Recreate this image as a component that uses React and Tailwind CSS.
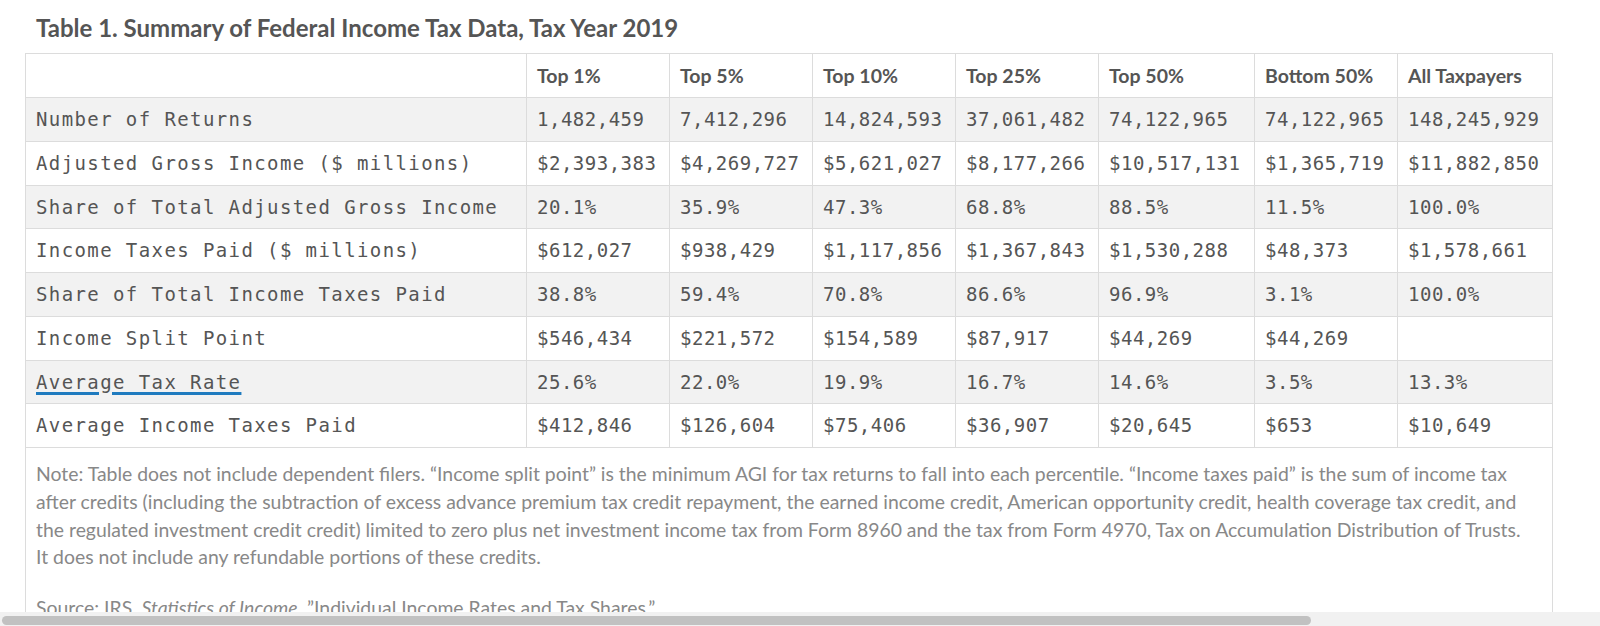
import React from 'react'

const cols = ['Top 1%', 'Top 5%', 'Top 10%', 'Top 25%', 'Top 50%', 'Bottom 50%', 'All Taxpayers']

const rows = [
    ['Number of Returns', '1,482,459', '7,412,296', '14,824,593', '37,061,482', '74,122,965', '74,122,965', '148,245,929'],
    ['Adjusted Gross Income ($ millions)', '$2,393,383', '$4,269,727', '$5,621,027', '$8,177,266', '$10,517,131', '$1,365,719', '$11,882,850'],
    ['Share of Total Adjusted Gross Income', '20.1%', '35.9%', '47.3%', '68.8%', '88.5%', '11.5%', '100.0%'],
    ['Income Taxes Paid ($ millions)', '$612,027', '$938,429', '$1,117,856', '$1,367,843', '$1,530,288', '$48,373', '$1,578,661'],
    ['Share of Total Income Taxes Paid', '38.8%', '59.4%', '70.8%', '86.6%', '96.9%', '3.1%', '100.0%'],
    ['Income Split Point', '$546,434', '$221,572', '$154,589', '$87,917', '$44,269', '$44,269', ''],
    ['Average Tax Rate', '25.6%', '22.0%', '19.9%', '16.7%', '14.6%', '3.5%', '13.3%'],
    ['Average Income Taxes Paid', '$412,846', '$126,604', '$75,406', '$36,907', '$20,645', '$653', '$10,649'],
]

export default function App() {
    return (
        <div className="h-[626px] flex flex-col overflow-hidden bg-white">
            <div className="flex-1 overflow-hidden pl-[25px]">
                <div className="h-[53px] flex items-end pb-[10px] pl-[11px]">
                    <h2 className="font-['Lato',sans-serif] font-bold text-[24px] leading-[30px] text-[#555]">
                        Table 1. Summary of Federal Income Tax Data, Tax Year 2019
                    </h2>
                </div>
                <table className="table-fixed border-collapse w-[1527px] border border-[#dcdcdc]">
                    <colgroup>
                        <col className="w-[501px]" />
                        <col className="w-[143px]" />
                        <col className="w-[143px]" />
                        <col className="w-[143px]" />
                        <col className="w-[143px]" />
                        <col className="w-[156px]" />
                        <col className="w-[143px]" />
                        <col className="w-[155px]" />
                    </colgroup>
                    <thead>
                        <tr className="bg-white">
                            <th className="h-[44px] border border-[#dcdcdc]"></th>
                            {cols.map(c => (
                                <th key={c} className="h-[44px] px-[10px] border border-[#dcdcdc] text-left font-['Lato',sans-serif] font-bold text-[19.5px] text-[#555]">
                                    {c}
                                </th>
                            ))}
                        </tr>
                    </thead>
                    <tbody>
                        {rows.map((r, i) => (
                            <tr key={r[0]} className={i % 2 === 0 ? 'bg-[#f2f2f2]' : 'bg-white'}>
                                {r.map((v, j) => (
                                    <td key={j} className={j === 0
                                        ? "h-[43.75px] px-[10px] border border-[#dcdcdc] font-['DejaVu_Sans_Mono',monospace] text-[19px] tracking-[1.4px] text-[#555] whitespace-nowrap"
                                        : "h-[43.75px] px-[10px] border border-[#dcdcdc] font-['DejaVu_Sans_Mono',monospace] text-[19px] tracking-[0.5px] text-[#555] whitespace-nowrap"}>
                                        {j === 0 && v === 'Average Tax Rate'
                                            ? <span className="underline decoration-[#1f7bbf] decoration-[3px] underline-offset-[3px]">{v}</span>
                                            : v}
                                    </td>
                                ))}
                            </tr>
                        ))}
                        <tr>
                            <td colSpan={8} className="pl-[10px] pr-[27px] pt-[12px] pb-[10px] border border-[#dcdcdc] align-top font-['Lato',sans-serif] text-[19.4px] leading-[27.8px] text-[#888]">
                                <p className="mb-[23px]">
                                    Note: Table does not include dependent filers. “Income split point” is the minimum AGI for tax returns to fall into each percentile. “Income taxes paid” is the sum of income tax after credits (including the subtraction of excess advance premium tax credit repayment, the earned income credit, American opportunity credit, health coverage tax credit, and the regulated investment credit credit) limited to zero plus net investment income tax from Form 8960 and the tax from Form 4970, Tax on Accumulation Distribution of Trusts. It does not include any refundable portions of these credits.
                                </p>
                                <p>
                                    Source: IRS, <em>Statistics of Income</em>, ”Individual Income Rates and Tax Shares.”
                                </p>
                            </td>
                        </tr>
                    </tbody>
                </table>
            </div>
            <div className="h-[14px] shrink-0 bg-[#f1f1f1] pt-[4px] pl-[2px]">
                <div className="h-[9px] w-[1309px] rounded-full bg-[#c1c1c1]"></div>
            </div>
        </div>
    )
}
